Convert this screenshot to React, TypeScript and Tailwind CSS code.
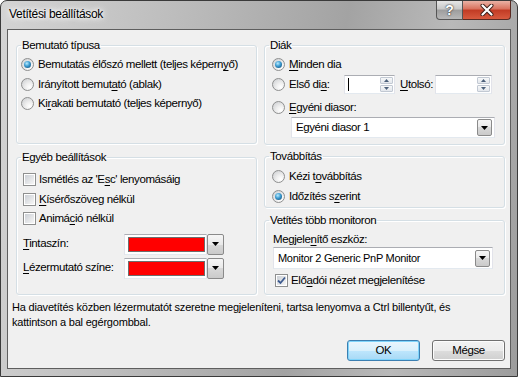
import type { ReactNode } from "react";

// "&" marks the mnemonic letter, as in a Windows dialog resource
function mn(text: string) {
  const i = text.indexOf("&");
  if (i < 0) return text;
  return (
    <>
      {text.slice(0, i)}
      <u className="underline-offset-[2px]">{text[i + 1]}</u>
      {text.slice(i + 2)}
    </>
  );
}

function Radio({ label, checked }: { label: string; checked?: boolean }) {
  return (
    <div className="flex h-[19.5px] items-center gap-[4px] whitespace-nowrap">
      <span className="flex h-[13px] w-[13px] shrink-0 items-center justify-center rounded-full border border-[#8e8f8f] bg-[radial-gradient(circle_at_70%_75%,#ffffff,#f0f0f0_35%,#c9cbce)]">
        {checked && (
          <span className="h-[7px] w-[7px] rounded-full bg-[radial-gradient(circle_at_40%_35%,#b9ecff,#3a9ad0_45%,#0f3f64)]" />
        )}
      </span>
      <span>{mn(label)}</span>
    </div>
  );
}

function Check({ label, checked }: { label: string; checked?: boolean }) {
  return (
    <div className="flex h-[19.5px] items-center gap-[3px] whitespace-nowrap">
      <span className="flex h-[13px] w-[13px] shrink-0 items-center justify-center border border-[#8e8f8f] bg-white p-px">
        <span className="relative h-full w-full bg-[linear-gradient(135deg,#cbcfd5,#f6f6f6)]">
          {checked && (
            <svg className="absolute inset-0" width="9" height="9" viewBox="0 0 9 9">
              <path d="M1 4.5 L3.5 7 L8 1.5" fill="none" stroke="#3d5a8f" strokeWidth="1.8" />
            </svg>
          )}
        </span>
      </span>
      <span>{mn(label)}</span>
    </div>
  );
}

function Arrow() {
  return (
    <svg width="7" height="4" viewBox="0 0 7 4">
      <path d="M0 0h7L3.5 4z" fill="#000" />
    </svg>
  );
}

function DropBtn({ className }: { className: string }) {
  return (
    <span
      className={`flex items-center justify-center rounded-[2px] border border-[#8a8a8a] bg-[linear-gradient(#f6f6f6,#e9e9e9_50%,#d8d8d8_50%,#cacaca)] ${className}`}
    >
      <Arrow />
    </span>
  );
}

function Combo({ text, className, textClass = "" }: { text: string; className: string; textClass?: string }) {
  return (
    <div
      className={`flex items-center border border-[#abadb3] border-b-[#e3e9ef] border-x-[#e2e3ea] bg-white pl-[4px] pr-[2px] whitespace-nowrap ${className}`}
    >
      <span className={textClass}>{text}</span>
      <DropBtn className="ml-auto h-[17px] w-[15px]" />
    </div>
  );
}

function ColorPick() {
  return (
    <div className="flex h-[21px] w-[100px]">
      <div className="flex flex-1 items-center border border-[#abadb3] border-x-[#e2e3ea] border-b-[#e3e9ef] bg-white py-[2px] pl-[3px] pr-[1px]">
        <span className="h-full w-full border border-[#6d6d6d] bg-[#ff0000]" />
      </div>
      <DropBtn className="h-[21px] w-[17px]" />
    </div>
  );
}

function Spin({ className, caret }: { className: string; caret?: boolean }) {
  return (
    <div
      className={`flex h-[19px] items-stretch border border-[#abadb3] border-x-[#e2e3ea] border-b-[#e3e9ef] bg-white ${className}`}
    >
      <div className="flex flex-1 items-center pl-[3px]">
        {caret && <span className="h-[13px] w-px bg-black" />}
      </div>
      <div className="flex w-[15px] flex-col gap-px p-px">
        {[0, 1].map((k) => (
          <span
            key={k}
            className="flex flex-1 items-center justify-center rounded-[1px] border border-[#c2c9d3] bg-[linear-gradient(#f7f8f9,#e3e7ec)]"
          >
            <svg width="5" height="3" viewBox="0 0 5 3">
              <path d={k === 0 ? "M0 3h5L2.5 0z" : "M0 0h5L2.5 3z"} fill="#4c607a" />
            </svg>
          </span>
        ))}
      </div>
    </div>
  );
}

function Group({ title, className, children }: { title: string; className: string; children: ReactNode }) {
  return (
    <fieldset
      className={`rounded-[3px] border border-[#d5dfe5] shadow-[inset_1px_1px_0_#ffffff,1px_1px_0_#ffffff] ${className}`}
    >
      <legend className="ml-[4px] px-[1px] leading-[15px]">{title}</legend>
      {children}
    </fieldset>
  );
}

function Button({ label, focused }: { label: string; focused?: boolean }) {
  return (
    <div
      className={`flex h-[21px] w-[73px] items-center justify-center rounded-[3px] border ${
        focused
          ? "border-[#3c7fb1] bg-[linear-gradient(#eaf6fd,#d9f0fc_50%,#bee6fd_50%,#a7d9f5)] shadow-[inset_0_0_0_1px_#7fd4fb]"
          : "border-[#707070] bg-[linear-gradient(#f2f2f2,#ebebeb_50%,#dddddd_50%,#cfcfcf)] shadow-[inset_0_0_0_1px_#fcfcfc]"
      }`}
    >
      {label}
    </div>
  );
}

export default function App() {
  return (
    <div className="flex h-[377px] w-[518px] flex-col rounded-t-[7px] border border-[#3a3a3a] bg-[linear-gradient(100deg,#d4d4d4,#bdbdbd_30%,#a3a3a3_60%,#b9b9b9_78%,#9c9c9c)] px-[6px] pb-[7px] font-['Liberation_Sans'] text-[11.5px] tracking-[-0.4px] text-black">
      {/* title bar */}
      <div className="flex h-[28px] shrink-0 items-start">
        <span className="pl-[2px] pt-[6px] text-[12px] leading-[15px] tracking-[-0.3px] [text-shadow:0_0_6px_#ffffff,0_0_10px_#ffffff,0_0_3px_#ffffff]">
          Vetítési beállítások
        </span>
        <div className="ml-auto flex h-[19px]">
          <div className="flex w-[27px] items-center justify-center rounded-bl-[4px] border border-t-0 border-[#555555] bg-[linear-gradient(#e6e6e6,#c8c8c8_45%,#9d9d9d_50%,#b8b8b8)] pb-px text-[14px] font-bold leading-none tracking-normal text-white [text-shadow:0_0_2px_#333,0_0_1px_#333]">
            ?
          </div>
          <div className="flex w-[48px] items-center justify-center rounded-br-[4px] border border-l-0 border-t-0 border-[#5a2a22] bg-[linear-gradient(#eab2a5,#d8705c_45%,#c13b24_50%,#d85a3f)]">
            <svg width="14" height="12" viewBox="0 0 14 12">
              <path d="M2.5 1.5 L11.5 10.5 M11.5 1.5 L2.5 10.5" stroke="#3b1d17" strokeWidth="4" strokeLinecap="round" />
              <path d="M2.5 1.5 L11.5 10.5 M11.5 1.5 L2.5 10.5" stroke="#ffffff" strokeWidth="2.2" strokeLinecap="round" />
            </svg>
          </div>
        </div>
      </div>

      {/* client area */}
      <div className="flex flex-1 flex-col border border-[#5e5e5e] bg-[#f0f0f0]">
        <div className="grid grid-cols-[241px_241px] gap-x-[7px] pl-[8px] pt-[8px]">
          <div className="flex flex-col gap-[6px]">
            <Group title="Bemutató típusa" className="h-[106px]">
              <div className="pl-[4px] pt-[2px]">
                <Radio checked label="Bemutatás élőszó mellett (teljes képern&yő)" />
                <Radio label="Irányított bemut&ató (ablak)" />
                <Radio label="Ki&rakati bemutató (teljes képernyő)" />
              </div>
            </Group>
            <Group title="Egyéb beállítások" className="h-[145px]">
              <div className="pl-[6px] pt-[5px]">
                <Check label="Ismétlés az 'E&sc' lenyomásáig" />
                <Check label="&Kísérőszöveg nélkül" />
                <Check label="Animá&ció nélkül" />
                <div className="mt-[5px] flex flex-col gap-[3px]">
                  <div className="flex items-center">
                    <span className="w-[101px]">{mn("&Tintaszín:")}</span>
                    <ColorPick />
                  </div>
                  <div className="flex items-center">
                    <span className="w-[101px]">{mn("&Lézermutató színe:")}</span>
                    <ColorPick />
                  </div>
                </div>
              </div>
            </Group>
          </div>

          <div className="flex flex-col">
            <Group title="Diák" className="h-[107px]">
              <div className="pl-[7px] pt-[2px]">
                <Radio checked label="&Minden dia" />
                <div className="flex h-[20px] items-center">
                  <div className="w-[72px]">
                    <Radio label="Első di&a:" />
                  </div>
                  <Spin caret className="w-[51px]" />
                  <span className="ml-[5px] mr-[2px] whitespace-nowrap">{mn("&Utolsó:")}</span>
                  <Spin className="w-[57px]" />
                </div>
                <div className="mt-[3px]">
                  <Radio label="&Egyéni diasor:" />
                </div>
                <Combo text="Egyéni diasor 1" className="ml-[19px] h-[21px] w-[204px]" />
              </div>
            </Group>
            <Group title="Továbbítás" className="mt-[4px] h-[59px]">
              <div className="pl-[7px] pt-[3px]">
                <Radio label="Kézi t&ovábbítás" />
                <Radio checked label="Időzítés s&zerint" />
              </div>
            </Group>
            <Group title="Vetítés több monitoron" className="mt-[5px] h-[82px]">
              <div className="pl-[8px] pt-[4px]">
                <div className="leading-[15px]">{mn("Megjele&nítő eszköz:")}</div>
                <Combo
                  text="Monitor 2 Generic PnP Monitor"
                  textClass="text-[11px] tracking-[-0.3px]"
                  className="h-[22px] w-[220px]"
                />
                <div className="ml-[2px] mt-[2px]">
                  <Check checked label="Elő&adói nézet megjelenítése" />
                </div>
              </div>
            </Group>
          </div>
        </div>

        <p className="mt-[5px] pl-[4px] text-[11px] leading-[15px] tracking-[-0.2px]">
          Ha diavetítés közben lézermutatót szeretne megjeleníteni, tartsa lenyomva a Ctrl billentyűt, és
          <br />
          kattintson a bal egérgombbal.
        </p>

        <div className="mt-[10px] flex justify-end gap-[12px] pr-[5px]">
          <Button focused label="OK" />
          <Button label="Mégse" />
        </div>
      </div>
    </div>
  );
}
